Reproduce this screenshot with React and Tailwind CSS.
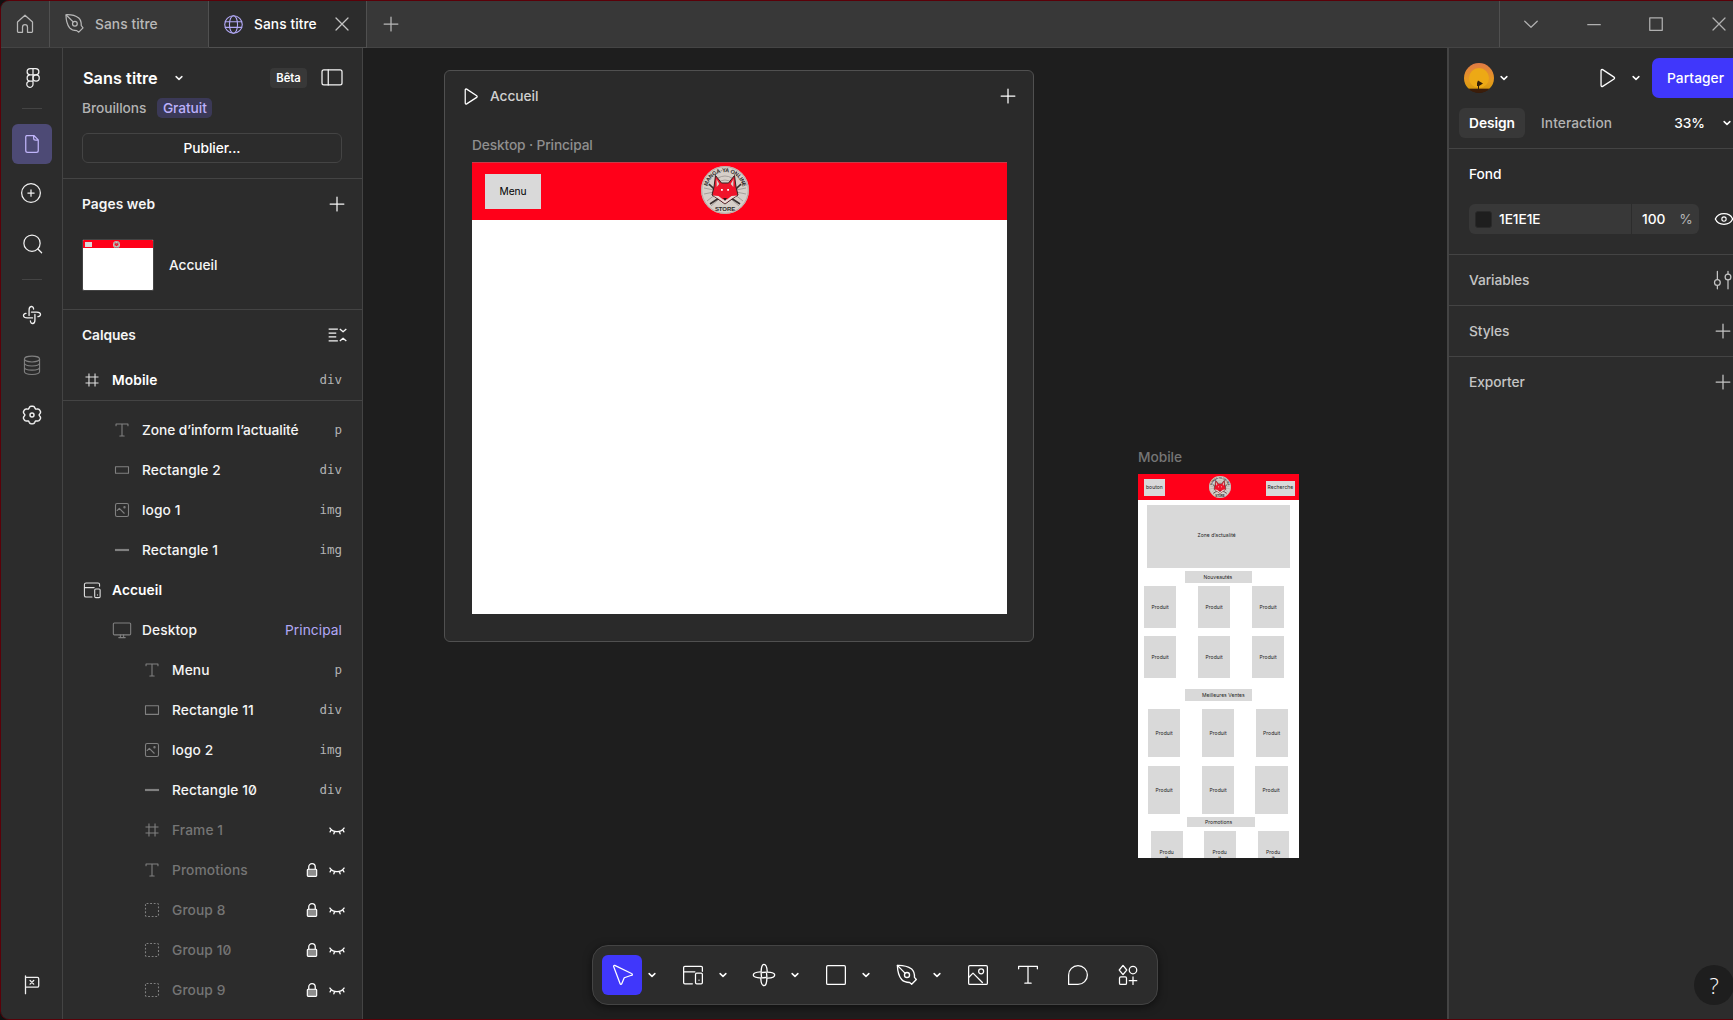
const Svg = ({ size = 30, vb = 24, sw = 1, className = '', children }) => (
  <svg width={size} height={size} viewBox={`0 0 ${vb} ${vb}`} fill="none" stroke="currentColor" strokeWidth={sw} strokeLinecap="round" strokeLinejoin="round" className={`shrink-0 ${className}`}>{children}</svg>
);

// Six-lobed outline of the settings icon
const gearPath = `M${Array.from({ length: 73 }, (_, i) => {
  const a = (i * Math.PI) / 36;
  const k = 6 * (a - Math.PI / 2);
  const r = 6.500 + 0.800 * Math.cos(k) - 0.200 * Math.cos(2 * k);
  return `${(12 + 1.040 * r * Math.cos(a)).toFixed(2)} ${(12 + r * Math.sin(a)).toFixed(2)}`;
}).join('L')}z`;

const paths = {
  home: <path d="M6 10.400 12 5l6 5.400V18a.6.6 0 0 1-.6.6H14V14.500a2 2 0 0 0-4 0v4.100H6.600A.6.6 0 0 1 6 18z" />,
  pen: <><path d="M4.600 4.600c3.800-.2 7.600.7 10.200 2.600 1.500 1.400 2.100 3.800 2 6l1.400 1.900-3.400 3.400-1.600-1.200c-2.400 0-4.300-.6-5.700-2.200C5.600 12.600 4.600 8.600 4.600 4.600z" transform="translate(1 0)" /><path d="m5.800 4.800 5.500 5.500" /><circle cx="12.700" cy="11.700" r="1.900" /></>,
  penTool: <><path d="M4.600 4.800c4-.1 8 .8 10.700 2.700 1.600 1.400 2.200 4 2.100 6.300l1.400 1.600-3.500 3.500-1.500-1.300c-2.500 0-4.600-.6-6-2.200C5.700 12.800 4.700 8.800 4.600 4.800z" transform="translate(.2 0)" /><path d="m4.800 4.800 5.700 5.800" /><circle cx="12" cy="12" r="1.900" /></>,
  globe: <><circle cx="12" cy="12" r="7.800" /><ellipse cx="12" cy="12" rx="3.600" ry="7.800" /><path d="M4.700 9.500h14.600M4.700 14.500h14.600" /></>,
  close: <path d="m7 7 10 10M17 7 7 17" />,
  closeSmall: <path d="m7.200 7.200 9.600 9.600M16.800 7.200l-9.600 9.600" />,
  plus: <path d="M12 6.500v11M6.500 12h11" />,
  chevron: <path d="m9.700 10.900 2.300 2.200 2.300-2.200" />,
  sidebar: <><rect x="4" y="5.500" width="16" height="12" rx="1.500" /><path d="M9 5.500v12" /></>,
  figma: <><path d="M12 4.500H9.800a2.500 2.500 0 0 0 0 5H12zM12 4.500h2.200a2.500 2.500 0 0 1 0 5H12zM12 9.500H9.800a2.500 2.500 0 0 0 0 5H12zM12 14.500H9.800A2.500 2.500 0 1 0 12 17.200z" /><circle cx="14.500" cy="12" r="2.500" /></>,
  doc: <path d="M7.500 4.500h6L17 8v8.500a1.500 1.500 0 0 1-1.500 1.500h-7A1.500 1.500 0 0 1 7 16.500V5.500a1 1 0 0 1 1-1zM13.300 4.500v2.200A1.500 1.500 0 0 0 14.800 8.200H17" transform="translate(0 .7)" />,
  addCircle: <><circle cx="12" cy="12" r="7.500" /><path d="M12 9.500v5M9.500 12h5" /></>,
  search: <><circle cx="12" cy="11.300" r="6.500" /><path d="m16.700 16 3 3" /></>,
  actions: [0, 90, 180, 270].map((r) => <path key={r} transform={`rotate(${r} 12 12)`} d="M10.100 13.200C9.600 9.500 9.800 4 12 4C13.400 4 14.200 6 14.400 9.200" />),
  pinwheel: [0, 90, 180, 270].map((r) => <path key={r} transform={`rotate(${r} 12 12)`} d="M9.300 12.500V7.500C9.300 3.200 13.200 3.200 13.500 6.500" />),
  db: <><ellipse cx="12" cy="6.500" rx="7" ry="2.700" /><path d="M5 6.500v11.500c0 1.500 3.100 2.700 7 2.700s7-1.200 7-2.700V6.500M5 10.200c0 1.500 3.100 2.700 7 2.700s7-1.200 7-2.700M5 14c0 1.500 3.100 2.700 7 2.700s7-1.200 7-2.700" /></>,
  gear: <><path d={gearPath} /><circle cx="12" cy="12" r="1.600" /></>,
  flag: <><path d="M6 3.500v16.500M6 5h11A1.200 1.200 0 0 1 18.200 6.200v6.600a1.200 1.200 0 0 1-1.200 1.200H6" /><path d="m10.200 7.800 3.400 3.400m0-3.400-3.400 3.400" /></>,
  collapse: <path strokeLinecap="butt" d="M4.300 6.500h8.500M4.300 10.200h7M4.300 13.800h7M4.300 17.500h8.500M14.600 6.500l3 2.600 3-2.600M14.600 17.500l3-2.600 3 2.600" />,
  frame: <path strokeLinecap="butt" d="M9.200 6v12M14.800 6v12M6 9.200h12M6 14.800h12" />,
  text: <path d="M6.500 8V6.500h11V8M12 6.500v11M10 17.500h4" />,
  rect: <rect x="6" y="8" width="12" height="8" />,
  flat: <path strokeWidth="2" strokeLinecap="butt" d="M5.500 12h13" />,
  rectSmall: <rect x="6" y="9" width="12" height="6" />,
  image: <><rect x="6" y="6" width="12" height="12" rx="1.500" /><path d="m7.500 12.500 2-2 4.500 4.500" /><circle cx="14.300" cy="9.500" r=".6" /></>,
  page: <><path d="M12 18.500H6.500a1.500 1.500 0 0 1-1.500-1.500V7A1.500 1.500 0 0 1 6.500 5.500h11A1.500 1.500 0 0 1 19 7V8.500M5 9.800h9" /><rect x="14.500" y="11" width="5" height="8" rx="1" /><path d="M17 16.500v.2" /></>,
  desktop: <><rect x="4" y="5.500" width="16" height="11" rx="1" /><path d="M10.500 16.500v2.500m3-2.500v2.500M9 19h6" /></>,
  group: <rect x="6" y="6" width="12" height="12" rx="1" strokeDasharray="1.700 1.600" strokeLinecap="butt" />,
  lock: <><path d="M9 11.500V9.200a3 3 0 0 1 6 0v2.300" strokeWidth="1.200" /><rect x="7.700" y="11.300" width="8.600" height="6.500" rx=".8" fill="#8c8c8c" strokeWidth="1.100" /></>,
  hidden: <path strokeWidth="1.200" d="M5.500 10.200c3.200 4.400 9.800 4.400 13 0M6.800 11.700l-1.200 2M9.800 13.300l-.7 2.200M14.200 13.300l.7 2.200M17.200 11.700l1.200 2" />,
  play: <path d="M6.500 5.200v13.600a1 1 0 0 0 1.500.9l10.500-6.800a1 1 0 0 0 0-1.700L8 4.300a1 1 0 0 0-1.500.9z" />,
  sliders: <><path d="M7.500 5v6.500M7.500 16.500V19M16 5v2M16 12v7" /><circle cx="7.500" cy="14" r="2.300" /><circle cx="16" cy="9.500" r="2.300" /></>,
};

const I = ({ n, ...p }) => <Svg {...p}>{paths[n]}</Svg>;

const layers = [
  { n: 'text', t: 'Zone d’inform l’actualité', tag: 'p', d: 1 },
  { n: 'rectSmall', t: 'Rectangle 2', tag: 'div', d: 1 },
  { n: 'image', t: 'logo 1', tag: 'img', d: 1 },
  { n: 'flat', t: 'Rectangle 1', tag: 'img', d: 1 },
  { n: 'page', t: 'Accueil', d: 0 },
  { n: 'desktop', t: 'Desktop', d: 1, main: true },
  { n: 'text', t: 'Menu', tag: 'p', d: 2 },
  { n: 'rect', t: 'Rectangle 11', tag: 'div', d: 2 },
  { n: 'image', t: 'logo 2', tag: 'img', d: 2 },
  { n: 'flat', t: 'Rectangle 10', tag: 'div', d: 2 },
  { n: 'frame', t: 'Frame 1', d: 2, hidden: true },
  { n: 'text', t: 'Promotions', d: 2, hidden: true, lock: true },
  { n: 'group', t: 'Group 8', d: 2, hidden: true, lock: true },
  { n: 'group', t: 'Group 10', d: 2, hidden: true, lock: true },
  { n: 'group', t: 'Group 9', d: 2, hidden: true, lock: true },
];
const indent = ['pl-[16px]', 'pl-[46px]', 'pl-[76px]'];

function Layer({ l }) {
  return (
    <div className={`flex h-10 shrink-0 items-center pr-[17px] ${indent[l.d]}`}>
      <I n={l.n} size={26} className={`mr-[7px] ${l.d === 0 ? 'text-[#e0e0e0]' : 'text-[#808080]'}`} />
      <span className={`flex-1 whitespace-nowrap slashed-zero ${l.d === 0 ? 'font-semibold text-white' : l.hidden ? 'text-[#757575]' : 'text-[#f5f5f5]'} ${l.t.length > 20 ? 'tracking-[-0.005em]' : 'tracking-[0.007em]'}`}>{l.t}</span>
      {l.tag && <span className="mt-px mr-[3px] font-['DejaVu_Sans_Mono',monospace] text-[12.500px] font-normal tracking-normal text-[#b3b3b3]">{l.tag}</span>}
      {l.main && <span className="mr-[3px] font-normal tracking-[0.005em] text-[#b1a8f5]">Principal</span>}
      {l.lock && <I n="lock" size={26} className="-mr-px text-white" />}
      {l.hidden && <I n="hidden" size={26} className="-mr-[5px] text-white" />}
    </div>
  );
}

function Fox({ size, className = '' }) {
  return (
    <svg width={size} height={size} viewBox="0 0 48 48" className={`shrink-0 ${className}`}>
      <defs>
        <path id="arcTop" d="M6.600 28.700A18 18 0 1 1 41.400 28.700" />
      </defs>
      <circle cx="24" cy="24" r="24" fill="#d6cfc8" />
      <circle cx="24" cy="24" r="23.300" fill="none" stroke="#b5a9a3" strokeWidth="1" />
      <g stroke="#918a86" strokeWidth=".7" fill="none">
        <path d="M3 22l10 2M3 28l10-2M6 35l9-7M45 22l-10 2M45 28l-10-2M42 35l-9-7M10 40l8-7M38 40l-8-7M17 12q7-4 14 0M19 15q5-2 10 0M4 18l9 3M44 18l-9 3" />
      </g>
      <path d="M8 18l8 8M40 18l-8 8M9 38l9-6M39 38l-9-6" stroke="#38302f" strokeWidth="1.600" />
      <path d="M14.500 9.500 20.500 17h7l6-7.500L35 21l2 8L31 33 24 38l-7-5L11 29l2-8z" fill="#f0142a" stroke="#382022" strokeWidth="1" strokeLinejoin="round" />
      <path d="M15.500 13l2.800 5-2.600 3zM32.500 13l-2.800 5 2.600 3z" fill="#d9cfca" />
      <path d="M11.800 29.500l5.700.5 4.500 3.500h4l4.500-3.500 5.700-.5-5.200 3L24 37.500l-7-5z" fill="#e8ded9" />
      <path d="M20 23h1.800v1.800H20zM26.200 23H28v1.800h-1.800z" fill="#fff" />
      <path d="M22 32h4L24 35z" fill="#28181a" />
      <text fontSize="5.600" fontWeight="700" fill="#2c2928" fontFamily="Liberation Sans, sans-serif" textLength="49"><textPath href="#arcTop" startOffset="8.500">MANGA-YA ONLINE</textPath></text>
      <text x="24" y="45" fontSize="6" fontWeight="700" fill="#2c2928" textAnchor="middle" fontFamily="Liberation Sans, sans-serif">STORE</text>
    </svg>
  );
}

// Wireframe blocks of the mobile mock-up: x, y, width, height, label, label x, label y
const blocks = [
  [6, 5, 21, 16.500, 'bouton', 8, 9.500],
  [127.500, 7, 29.500, 14.500, 'Recherche', 129.500, 9.500],
  [9, 31, 143, 62.500, 'Zone d’actualité', 59.500, 58],
  [46.500, 97, 67.500, 11.500, 'Nouveautés', 65.500, 99.500],
  [6, 112, 32, 42, 'Produit', 13.500, 130], [60, 112, 32, 42, 'Produit', 67.500, 130], [114.400, 112, 32, 42, 'Produit', 121.500, 130],
  [6, 162, 32, 42, 'Produit', 13.500, 180], [60, 162, 32, 42, 'Produit', 67.500, 180], [114, 162, 32, 42, 'Produit', 121.500, 180],
  [46.500, 215, 67.500, 11.500, 'Meilleures Ventes', 64, 217.500],
  [10, 235, 32.400, 48, 'Produit', 17.500, 256], [64, 235, 32.400, 48, 'Produit', 71.500, 256], [118, 235, 32.400, 48, 'Produit', 125, 256],
  [10, 292, 32.400, 48, 'Produit', 17.500, 313], [64, 292, 32.400, 48, 'Produit', 71.500, 313], [117.400, 292, 32.400, 48, 'Produit', 124.500, 313],
  [49, 343, 67.500, 9.500, 'Promotions', 67, 344.500],
  [13, 356.500, 32, 30, 'Produ\nit', 21.500, 375], [66, 356.500, 32, 30, 'Produ\nit', 74.500, 375], [120, 356.500, 31, 30, 'Produ\nit', 128, 375],
];

const Rail = () => (
  <div className="flex w-[62px] shrink-0 flex-col items-center border-r border-[#444] text-[#f0f0f0]">
    <I n="figma" className="mt-[15px] ml-[2px]" />
    <div className="mt-[15px] ml-px h-px w-5 bg-[#444]" />
    <div className="mt-[15px] ml-px flex size-10 items-center justify-center rounded-[6px] bg-[#4d4a75] text-[#c0b5fa]"><I n="doc" /></div>
    <I n="addCircle" className="mt-[14px] mr-px" />
    <I n="search" className="mt-[21px] ml-px" />
    <div className="mt-[20px] ml-px h-px w-5 bg-[#444]" />
    <I n="pinwheel" className="mt-[22px] ml-px" size={26} sw={1.2} />
    <I n="db" className="mt-[24px] ml-px text-[#808080]" size={26} />
    <I n="gear" className="mt-[22px] ml-px" sw={1.15} />
    <I n="flag" size={26} sw={1.2} className="mt-auto mb-[21px] ml-px" />
  </div>
);

const Section = ({ t, n }) => (
  <div className="flex h-[51px] items-center justify-between border-t border-[#444] pl-5 text-[#c4c4c4]">
    <span className="font-medium">{t}</span>
    <I n={n} className="mr-px" />
  </div>
);

const Chev = ({ className = '' }) => <I n="chevron" sw={1.2} className={`-mx-[10px] ${className}`} />;

export default function App() {
  return (
    <div className="h-[1020px] w-[1733px] overflow-hidden bg-[#111] font-['Inter',sans-serif] text-[13.750px] font-[450] tracking-[-0.005em]">
      <div className="flex h-[1020px] w-[1740px] flex-col overflow-hidden rounded-[9px] border border-[#5a0008] bg-[#1e1e1e]">
        <header className="flex h-[47px] shrink-0 items-stretch border-b border-[#444] bg-[#383838] font-medium tracking-[0.005em] text-[#b8b8b8]">
          <div className="flex w-[49px] items-center justify-center border-r border-[#505050]"><I n="home" /></div>
          <div className="flex w-[159px] items-center border-r border-[#505050] pl-[9px]"><I n="pen" /><span className="ml-[6px]">Sans titre</span></div>
          <div className="-mb-px flex w-[158px] items-center border-r border-b border-[#505050] bg-[#2c2c2c] pl-[11px] text-white">
            <I n="globe" size={27} className="text-[#b1a8f5]" /><span className="ml-[7px]">Sans titre</span><I n="closeSmall" className="ml-[10px] text-[#c4c4c4]" />
          </div>
          <I n="plus" className="mt-[8px] ml-[9px]" />
          <div className="ml-auto flex w-[240px] items-center border-l border-[#505050] pl-[16px] text-[#b0b0b0]">
            <Svg><path d="m7 9.800 5 4.800 5-4.800" /></Svg>
            <Svg className="ml-[33px]"><path d="M7 12.500h10" /></Svg>
            <Svg className="ml-[32px]"><rect x="7" y="7" width="10" height="10" /></Svg>
            <I n="closeSmall" className="ml-[33px]" />
          </div>
        </header>
        <main className="flex min-h-0 flex-1 bg-[#2c2c2c]">
          <Rail />
          <aside className="flex w-[300px] shrink-0 flex-col border-r border-[#444] text-[#f5f5f5]">
            <div className="h-[131px] shrink-0 border-b border-[#444] px-5 pt-[15px]">
              <div className="flex h-[30px] items-center">
                <span className="text-[16.250px] font-semibold tracking-[0.003em] text-white">Sans titre</span>
                <Chev className="ml-[6px]" />
                <span className="mr-[10px] ml-auto flex h-5 w-[37px] items-center justify-center rounded-[4px] bg-[#383838] text-[11.250px] font-semibold text-white">Bêta</span>
                <I n="sidebar" className="-mr-[5px]" />
              </div>
              <div className="flex h-[30px] items-center">
                <span className="-ml-px text-[#b3b3b3]">Brouillons</span>
                <span className="ml-[11px] flex h-5 w-[55px] items-center justify-center rounded-[5px] bg-[#3b3957] text-[#bbb0fb]">Gratuit</span>
              </div>
              <div className="mt-[10px] -ml-px flex h-[30px] w-[260px] items-center justify-center rounded-[6px] border border-[#444] font-medium text-white">Publier...</div>
            </div>
            <div className="h-[131px] shrink-0 border-b border-[#444]">
              <div className="flex h-[50px] items-center justify-between pr-[10px] pl-[19px]"><span className="font-semibold tracking-[0.005em]">Pages web</span><I n="plus" /></div>
              <div className="flex items-center pt-[10px] pl-[19px]">
                <div className="flex h-[52px] w-[72px] flex-col overflow-hidden rounded-[2px] border border-[#444] bg-white">
                  <div className="flex h-[8px] shrink-0 items-center bg-[#ff0019] pl-[2px]"><div className="h-[5px] w-[7px] bg-[#d9d9d9]" /><Fox size={7} className="ml-[21px]" /></div>
                </div>
                <span className="ml-[15px]">Accueil</span>
              </div>
            </div>
            <div className="flex h-[50px] shrink-0 items-center justify-between pr-[12px] pl-[19px]"><span className="font-semibold">Calques</span><I n="collapse" size={26} sw={1.2} /></div>
            <div className="h-[41px] shrink-0 border-b border-[#444]"><Layer l={{ n: 'frame', t: 'Mobile', tag: 'div', d: 0 }} /></div>
            <div className="flex min-h-0 flex-1 flex-col overflow-hidden pt-[9px]">{layers.map((l) => <Layer key={l.t} l={l} />)}</div>
          </aside>
          <div className="relative min-w-0 flex-1 overflow-hidden bg-[#1e1e1e]">
            <section className="absolute top-[22px] left-[81px] h-[572px] w-[590px] rounded-[6px] border border-[#505050] bg-[#2a2a2a]">
              <div className="flex h-[50px] items-center pr-[10px] pl-[14px]">
                <I n="play" size={23} sw={1.3} className="text-white" /><span className="ml-[8px] text-[#d0d0d0]">Accueil</span><I n="plus" className="ml-auto text-white" />
              </div>
              <div className="mt-[14px] ml-[27px] flex h-[20px] items-center tracking-[-0.01em] text-[#8f8f8f]">Desktop · Principal</div>
              <div className="mt-[7px] ml-[27px] h-[452px] w-[535px] bg-white">
                <div className="relative h-[58px] border-t border-[#c83a48] bg-[#ff0019] pt-[11px] pl-[13px]">
                  <div className="flex h-[35px] w-[56px] items-center justify-center bg-[#d9d9d9] pt-px text-[10.200px] font-normal text-black">Menu</div>
                  <Fox size={48} className="absolute top-[3px] left-[229px]" />
                </div>
              </div>
            </section>
            <div className="absolute top-[399px] left-[775px] text-[#757575]">Mobile</div>
            <div className="absolute top-[426px] left-[775px] h-[384px] w-[161px] overflow-hidden bg-white font-normal text-black">
              <div className="h-[26px] bg-[#ff0019]" />
              <Fox size={22} className="absolute top-[2px] left-[71px]" />
              {blocks.map(([x, y, w, h, t, tx, ty], i) => (
                <div key={i}>
                  <div className="absolute bg-[#d9d9d9]" style={{ left: x, top: y, width: w, height: h }} />
                  <div className="absolute text-center text-[5px] leading-[6px] tracking-[0.01em] whitespace-pre text-[#222]" style={{ left: tx, top: ty }}>{t}</div>
                </div>
              ))}
            </div>
            <div className="absolute top-[897px] left-[229px] flex h-[60px] w-[566px] items-center rounded-[16px] border border-[#444] bg-[#2c2c2c] pl-[9px] text-white shadow-[0_2px_8px_rgba(0,0,0,0.5)]">
              <div className="flex size-10 shrink-0 items-center justify-center rounded-[6px] bg-[#4037fb]"><Svg><path d="M4.300 5.200 9.500 19a.7.7 0 0 0 1.300 0l2-4.800 5.800-2a.7.7 0 0 0 0-1.400L5.200 4.300a.7.7 0 0 0-.9.900z" transform="translate(1 0)" /></Svg></div>
              <Chev className="ml-[-5px]" />
              <Svg className="ml-[21px]"><path d="M11.500 19H5.500a1 1 0 0 1-1-1V6a1 1 0 0 1 1-1h13a1 1 0 0 1 1 1v3M4.500 9.500h9" /><rect x="14" y="10.500" width="5.500" height="8.500" rx="1" /><path d="M16.800 16v.1" /></Svg>
              <Chev className="ml-0" /><I n="actions" size={32} className="ml-[20px]" />
              <Chev className="ml-0" /><Svg className="ml-[21px]"><rect x="4.500" y="4.500" width="15" height="15" rx="1" /></Svg>
              <Chev className="ml-0" /><I n="penTool" size={32} className="ml-[20px]" />
              <Chev className="ml-[-1px]" />
              <Svg className="ml-[21px]"><rect x="4.500" y="4.500" width="15" height="15" rx="1" /><path d="m4.500 14 3.500-3.500 7.500 7.500" /><circle cx="14.500" cy="9" r="2" /></Svg>
              <Svg className="ml-[20px]"><path d="M4.500 7V5h15v2M12 5v13.500M9.500 18.500h5" /></Svg>
              <Svg className="ml-[20px]"><path d="M4.500 19.500V12a7.500 7.500 0 1 1 7.500 7.500z" /></Svg>
              <Svg className="ml-[20px]"><path d="m8 4.300 3 3.700-3 3.700L5 8z" /><circle cx="16" cy="8" r="3" /><rect x="5.200" y="13.500" width="5.600" height="6" rx="1" /><path d="M16 13.500v6M13 16.500h6" /></Svg>
            </div>
          </div>
          <aside className="relative w-[292px] shrink-0 border-l-2 border-[#444] text-white">
            <div className="flex h-[60px] items-center pl-[15px]">
              <svg width="30" height="30" viewBox="0 0 30 30" className="shrink-0">
                <defs><linearGradient id="sunset" x1="0" y1="0" x2="0" y2="1"><stop offset="0" stopColor="#e07a45" /><stop offset=".6" stopColor="#e69a1e" /><stop offset=".82" stopColor="#d99a10" /><stop offset=".9" stopColor="#4e2508" /><stop offset="1" stopColor="#2a1508" /></linearGradient><clipPath id="av"><circle cx="15" cy="15" r="15" /></clipPath></defs>
                <g clipPath="url(#av)"><rect width="30" height="30" fill="url(#sunset)" /><circle cx="15" cy="15" r="10" fill="#eda915" /><path d="M0 26h30v4H0z" fill="#3b1d0a" /><path d="M14 17.500l5 3-4 2.500v4h-1v-4h-1v-3z" fill="#33200a" /></g>
              </svg>
              <Chev className="ml-[-5px]" />
              <I n="play" size={26} sw={1.2} className="ml-[85px]" />
              <Chev className="ml-[1px]" />
              <div className="ml-[11px] flex h-10 w-[110px] shrink-0 items-center rounded-[7px] bg-[#4037fb] pl-[15px] font-medium tracking-[0.005em]">Partager</div>
            </div>
            <div className="flex h-[40px] items-start pl-[10px]">
              <div className="flex h-[30px] w-[66px] items-center justify-center rounded-[6px] bg-[#383838] font-semibold">Design</div>
              <span className="ml-[16px] leading-[30px] tracking-[0.005em] text-[#b3b3b3]">Interaction</span>
              <span className="ml-[62px] leading-[30px]">33%</span><Chev className="ml-[7px]" />
            </div>
            <div className="h-[106px] border-t border-[#444] pl-5">
              <div className="flex h-[51px] items-center font-medium">Fond</div>
              <div className="mt-[4px] flex items-center">
                <div className="flex h-[30px] w-[162px] items-center rounded-l-[6px] bg-[#383838] pl-[6px]"><div className="mr-[7px] size-[17px] rounded-[3px] border border-[#292929] bg-[#1e1e1e]" />1E1E1E</div>
                <div className="ml-px flex h-[30px] w-[67px] items-center rounded-r-[6px] bg-[#383838] pl-[10px]">100<span className="ml-[14px] font-normal text-[#b3b3b3]">%</span></div>
                <Svg size={26} className="ml-[12px]"><path d="M4 12c2.800-6.500 13.200-6.500 16 0-2.800 6.500-13.200 6.500-16 0z" strokeWidth="1.200" /><circle cx="12" cy="12" r="2" /></Svg>
              </div>
            </div>
            <Section t="Variables" n="sliders" /><Section t="Styles" n="plus" /><Section t="Exporter" n="plus" />
            <div className="absolute right-[5px] bottom-[14px] flex size-[40px] items-center justify-center rounded-full bg-[#1e1e1e]">
              <span className="font-['Open_Sans',sans-serif] text-[22px] leading-none font-light">?</span>
            </div>
          </aside>
        </main>
      </div>
    </div>
  );
}
